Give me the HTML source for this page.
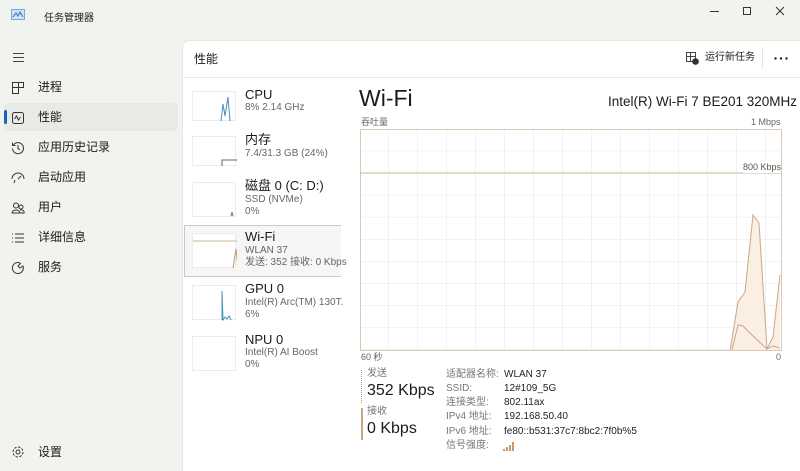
<!DOCTYPE html>
<html><head><meta charset="utf-8"><style>
*{margin:0;padding:0;box-sizing:border-box}
body{width:800px;height:471px;overflow:hidden;background:#f1f3ee;font-family:"Liberation Sans","Noto Sans CJK SC",sans-serif;color:#1b1b1b;position:relative;line-height:1.2}
.a{position:absolute;white-space:nowrap}
.nav{position:absolute;left:38px;font-size:12px}
.ico{position:absolute;left:11px;width:14px;height:14px}
.panel{position:absolute;left:182px;top:40px;width:618px;height:431px;background:#fff;border-radius:7px 0 0 0;border-left:1px solid #e4e6e1;border-top:1px solid #e4e6e1}
.th{position:absolute;left:192px;width:44px;height:30px;border:1px solid #ececec;background:#fff}
.t1{position:absolute;left:245px;font-size:13px}
.t2{position:absolute;left:245px;font-size:10px;color:#666}
.lab{position:absolute;left:446px;font-size:10px;color:#777}
.val{position:absolute;left:504px;font-size:10px;color:#222}
</style></head><body>
<svg class="a" style="left:11px;top:9px" width="14" height="11"><rect x="0.5" y="0.5" width="13" height="10" fill="#cfe3f5" stroke="#7aa7d6"/><path d="M2 8 L5 4 L7 7 L9 3 L12 8" stroke="#2f6db3" fill="none"/></svg>
<div class="a" style="left:44px;top:13px;font-size:10px">任务管理器</div>
<div class="a" style="left:710px;top:11px;width:9px;height:1px;background:#333"></div>
<div class="a" style="left:743px;top:7px;width:8px;height:8px;border:1px solid #333"></div>
<svg class="a" style="left:775px;top:6px" width="10" height="10"><path d="M1 1L9 9M9 1L1 9" stroke="#333"/></svg>
<div class="a" style="left:13px;top:53px;width:11px;height:9px;border-top:1px solid #444;border-bottom:1px solid #444"></div>
<div class="a" style="left:13px;top:57px;width:11px;height:1px;background:#444"></div>
<div class="a" style="left:4px;top:103px;width:174px;height:28px;background:#e8eae5;border-radius:4px"></div>
<div class="a" style="left:4px;top:110px;width:3px;height:14px;background:#1565c0;border-radius:2px"></div>
<svg class="ico" style="top:81px" viewBox="0 0 14 14"><path d="M1.5 1.5h11v5h-5v6h-6z M7.5 1.5v5 M1.5 6.5h6" fill="none" stroke="#333"/></svg>
<div class="nav" style="top:80px">进程</div>
<svg class="ico" style="top:111px" viewBox="0 0 14 14"><rect x="1.5" y="1.5" width="11" height="11" rx="2" fill="none" stroke="#333"/><path d="M3.5 8l2-3 2 4 2-3" fill="none" stroke="#333"/></svg>
<div class="nav" style="top:110px">性能</div>
<svg class="ico" style="top:141px" viewBox="0 0 14 14"><path d="M2.5 4A5.5 5.5 0 1 1 1.5 7.5 M1.5 1.5v3h3 M7 4v3.5l2 1.5" fill="none" stroke="#333"/></svg>
<div class="nav" style="top:140px">应用历史记录</div>
<svg class="ico" style="top:171px" viewBox="0 0 14 14"><path d="M1 8a6 6 0 0 1 12 0 M7 8l3-3 M4 9l-1 3" fill="none" stroke="#333"/></svg>
<div class="nav" style="top:170px">启动应用</div>
<svg class="ico" style="top:201px" viewBox="0 0 14 14"><circle cx="5" cy="4.5" r="2.5" fill="none" stroke="#333"/><circle cx="10" cy="6" r="2" fill="none" stroke="#333"/><path d="M1 12a4 3 0 0 1 8 0z M8 12h5a3 2.5 0 0 0-4-3" fill="none" stroke="#333"/></svg>
<div class="nav" style="top:200px">用户</div>
<svg class="ico" style="top:231px" viewBox="0 0 14 14"><path d="M1 3h1M1 7h1M1 11h1M4 3h9M4 7h9M4 11h9" stroke="#333"/></svg>
<div class="nav" style="top:230px">详细信息</div>
<svg class="ico" style="top:261px" viewBox="0 0 14 14"><path d="M7 1.5a5.5 5.5 0 1 0 5 3.5 L9 7 7 5 9.5 2.5A5.5 5.5 0 0 0 7 1.5z" fill="none" stroke="#333"/></svg>
<div class="nav" style="top:260px">服务</div>
<svg class="ico" style="top:445px" viewBox="0 0 14 14"><circle cx="7" cy="7" r="2" fill="none" stroke="#333"/><circle cx="7" cy="7" r="5" fill="none" stroke="#333" stroke-dasharray="2.5 1.4"/></svg>
<div class="nav" style="top:445px">设置</div>

<div class="panel"></div>
<div class="a" style="left:194px;top:52px;font-size:12px">性能</div>
<div class="a" style="left:183px;top:77px;width:617px;height:1px;background:#e8e8e8"></div>
<svg class="a" style="left:686px;top:52px" width="13" height="13"><rect x="0.5" y="0.5" width="9" height="9" fill="none" stroke="#444"/><path d="M0.5 4.5h9M4.5 0.5v9" stroke="#444"/><circle cx="9.5" cy="9.5" r="3.3" fill="#333"/></svg>
<div class="a" style="left:705px;top:52px;font-size:10px">运行新任务</div>
<div class="a" style="left:762px;top:47px;width:1px;height:22px;background:#e5e5e5"></div>
<svg class="a" style="left:774px;top:57px" width="14" height="3"><circle cx="1.5" cy="1.5" r="1.2" fill="#222"/><circle cx="7" cy="1.5" r="1.2" fill="#222"/><circle cx="12.5" cy="1.5" r="1.2" fill="#222"/></svg>

<div class="th" style="top:91px"><svg width="44" height="30"><path d="M28 29 L30 12 L32 24 L35 5 L37 29" fill="none" stroke="#4a90b8"/></svg></div>
<div class="t1" style="top:87px">CPU</div><div class="t2" style="top:102px">8% 2.14 GHz</div>
<div class="th" style="top:136px"><svg width="44" height="30"><path d="M29 29V23H44" fill="none" stroke="#8a4d9a"/></svg></div>
<div class="t1" style="top:132px">内存</div><div class="t2" style="top:148px">7.4/31.3 GB (24%)</div>
<div class="th" style="top:182px;height:35px"><svg width="44" height="34"><path d="M38 33l1-4 1 4" stroke="#4a9a3a" fill="none"/></svg></div>
<div class="t1" style="top:178px">磁盘 0 (C: D:)</div><div class="t2" style="top:194px">SSD (NVMe)</div><div class="t2" style="top:206px">0%</div>
<div class="a" style="left:184px;top:225px;width:157px;height:52px;border:1px solid #c8c8c8;border-right:none;background:#f6f6f6"></div>
<div class="th" style="top:233px;height:35px"><svg width="44" height="35"><path d="M0 7H44" stroke="#c9b79a"/><path d="M40 34L43 15L45 34" stroke="#c49a6c" fill="none"/></svg></div>
<div class="t1" style="top:229px">Wi-Fi</div><div class="t2" style="top:245px">WLAN 37</div><div class="t2" style="top:257px">发送: 352 接收: 0 Kbps</div>
<div class="th" style="top:285px;height:35px"><svg width="44" height="35"><path d="M29 34V5L30 34 32 31 34 33 36 30 38 34" stroke="#4a90b8" fill="none"/></svg></div>
<div class="t1" style="top:281px">GPU 0</div><div class="t2" style="top:297px">Intel(R) Arc(TM) 130T.</div><div class="t2" style="top:309px">6%</div>
<div class="th" style="top:336px;height:35px"></div>
<div class="t1" style="top:332px">NPU 0</div><div class="t2" style="top:347px">Intel(R) AI Boost</div><div class="t2" style="top:359px">0%</div>

<div class="a" style="left:359px;top:85px;font-size:23px">Wi-Fi</div>
<div class="a" style="left:608px;top:94px;font-size:13.5px">Intel(R) Wi-Fi 7 BE201 320MHz</div>
<div class="a" style="left:361px;top:117px;font-size:9px;color:#666">吞吐量</div>
<div class="a" style="left:751px;top:117px;font-size:9px;color:#666">1 Mbps</div>
<svg class="a" style="left:360px;top:129px" width="423" height="223">
<defs><pattern id="g" width="29" height="22.1" patternUnits="userSpaceOnUse"><path d="M29 0V22.1M0 22.1H29" stroke="#e9e6e2" fill="none"/></pattern></defs>
<rect x="0.5" y="0.5" width="421" height="221" fill="url(#g)" stroke="#d9c9b5"/>
<path d="M0 44H422" stroke="#c9b79a"/>
<path d="M370 221L371 216L378 173L385 163L393 86L399 94L407 220L413 208L420 146L420 221Z" fill="#fbeee2"/>
<path d="M370 221L371 216L378 173L385 163L393 86L399 94L407 220L413 208L420 146" fill="none" stroke="#c8a888"/>
<path d="M372 221L378 196L383 197L392 206L407 220L413 217L420 219" fill="none" stroke="#c8a888"/>
</svg>
<div class="a" style="left:743px;top:162px;font-size:9px;color:#555;background:#fff">800 Kbps</div>
<div class="a" style="left:361px;top:352px;font-size:9px;color:#666">60 秒</div>
<div class="a" style="left:776px;top:352px;font-size:9px;color:#666">0</div>
<div class="a" style="left:361px;top:370px;width:1px;height:33px;border-left:1px dotted #c49a6c"></div>
<div class="a" style="left:367px;top:368px;font-size:10px;color:#777">发送</div>
<div class="a" style="left:367px;top:381px;font-size:16px">352 Kbps</div>
<div class="a" style="left:361px;top:408px;width:2px;height:32px;background:#c4a880"></div>
<div class="a" style="left:367px;top:406px;font-size:10px;color:#777">接收</div>
<div class="a" style="left:367px;top:419px;font-size:16px">0 Kbps</div>
<div class="lab" style="top:369px">适配器名称:</div><div class="val" style="top:369px">WLAN 37</div>
<div class="lab" style="top:383px">SSID:</div><div class="val" style="top:383px">12#109_5G</div>
<div class="lab" style="top:397px">连接类型:</div><div class="val" style="top:397px">802.11ax</div>
<div class="lab" style="top:411px">IPv4 地址:</div><div class="val" style="top:411px">192.168.50.40</div>
<div class="lab" style="top:426px">IPv6 地址:</div><div class="val" style="top:426px">fe80::b531:37c7:8bc2:7f0b%5</div>
<div class="lab" style="top:440px">信号强度:</div>
<svg class="a" style="left:502px;top:440px" width="14" height="12"><path d="M1 11V9h2v2zM4 11V7h2v4zM7 11V5h2v6zM10 11V2h2v9z" fill="#c49a6c"/></svg>
</body></html>
